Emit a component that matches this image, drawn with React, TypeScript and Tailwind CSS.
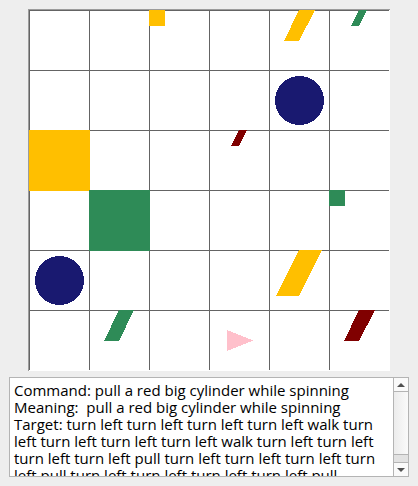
const COLORS = {
  yellow: '#ffbf00',
  green: '#2e8b57',
  blue: '#191970',
  red: '#800000',
  pink: '#ffc0cb',
};

const LINES = [0, 60, 120, 180, 240, 300];

const LOG = `Command: pull a red big cylinder while spinning
Meaning:  pull a red big cylinder while spinning
Target: turn left turn left turn left turn left walk turn
left turn left turn left turn left walk turn left turn left
turn left turn left pull turn left turn left turn left turn
left pull turn left turn left turn left turn left pull`;

function Board() {
  return (
    <svg
      viewBox="0 0 361 361"
      className="block w-full bg-white"
      shapeRendering="crispEdges"
      role="img"
      aria-label="Grid world"
    >
      {LINES.map((p) => (
        <g key={p} fill="#646464">
          <rect x={p} y={0} width={1} height={360} />
          <rect x={0} y={p} width={360} height={1} />
        </g>
      ))}
      <rect x="120" y="0" width="16" height="16" fill={COLORS.yellow} />
      <polygon points="270,0 286,0 270,31 255,31" fill={COLORS.yellow} />
      <polygon points="330,0 338,0 330,16 322,16" fill={COLORS.green} />
      <circle cx="270.500" cy="90.500" r="24.500" fill={COLORS.blue} />
      <rect x="0" y="120" width="61" height="61" fill={COLORS.yellow} />
      <polygon points="210,120 218,120 210,136 202,136" fill={COLORS.red} />
      <rect x="60" y="180" width="61" height="61" fill={COLORS.green} />
      <rect x="300" y="180" width="16" height="16" fill={COLORS.green} />
      <circle cx="30.500" cy="270.500" r="24.500" fill={COLORS.blue} />
      <polygon points="270,240 293,240 270,286 247,286" fill={COLORS.yellow} />
      <polygon points="90,300 105,300 90,331 75,331" fill={COLORS.green} />
      <polygon points="330,300 346,300 330,331 315,331" fill={COLORS.red} />
      <polygon points="198,320 224,330.500 198,341" fill={COLORS.pink} />
    </svg>
  );
}

function Arrow({ down = false }: { down?: boolean }) {
  return (
    <svg viewBox="0 0 8 4" className="w-2" aria-hidden="true">
      <path d={down ? 'M0 0H8L4 4Z' : 'M0 4H8L4 0Z'} fill="#505050" />
    </svg>
  );
}

function ScrollBar() {
  return (
    <div className="flex w-[15px] shrink-0 flex-col border-l border-[#b4b4b4] bg-linear-to-r from-[#ececec] to-[#fafafa]">
      <button
        type="button"
        aria-label="Scroll up"
        className="flex h-3.5 items-center justify-center border-b border-[#b4b4b4] bg-[#fafafa]"
      >
        <Arrow />
      </button>
      <div className="flex grow flex-col justify-end">
        <div className="h-2 border-t border-[#b4b4b4] bg-[#e2e2e2]" />
      </div>
      <button
        type="button"
        aria-label="Scroll down"
        className="flex h-3.5 items-center justify-center border-t border-[#b4b4b4] bg-[#fafafa]"
      >
        <Arrow down />
      </button>
    </div>
  );
}

export default function App() {
  return (
    <main className="flex min-h-screen flex-col gap-1.5 bg-[#eeeeee] p-[9px]">
      <div className="mx-auto w-full max-w-[362px] border-t border-l border-[#9c9c9c]">
        <Board />
      </div>
      <div className="flex h-[100px] border border-[#b4b4b4] bg-white">
        <textarea
          readOnly
          aria-label="Command log"
          defaultValue={LOG}
          className="min-w-0 grow resize-none overflow-hidden whitespace-pre bg-white px-1 pt-1 font-['Open_Sans',sans-serif] text-[15px] leading-[17px] text-black outline-none"
        />
        <ScrollBar />
      </div>
    </main>
  );
}
